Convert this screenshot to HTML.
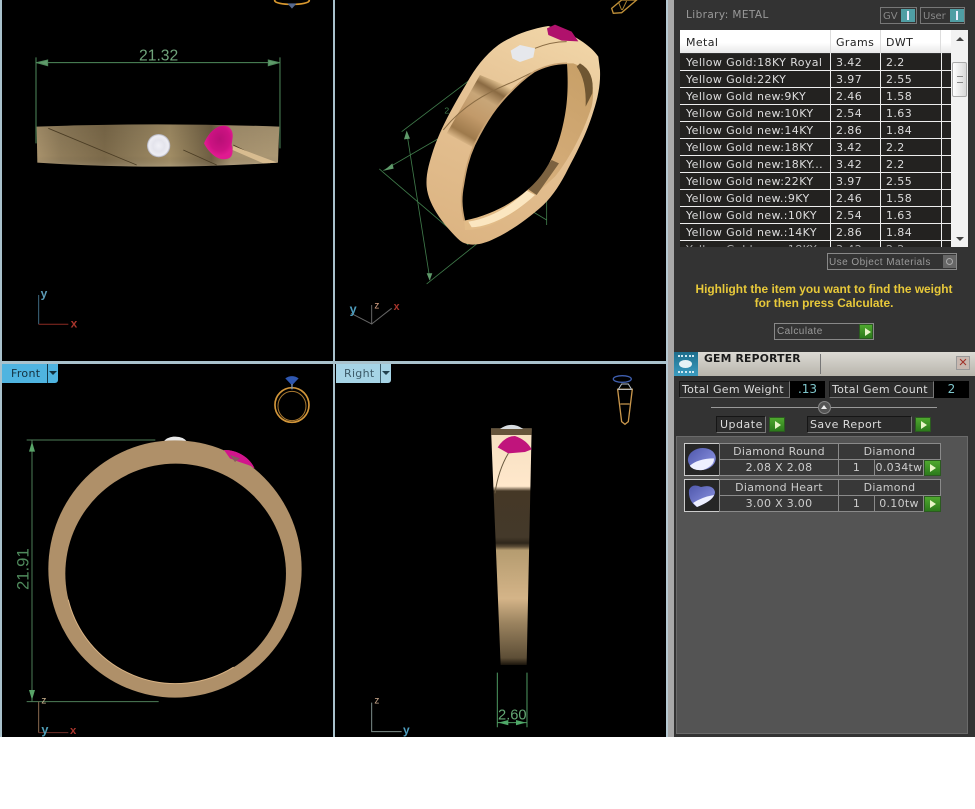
<!DOCTYPE html>
<html><head><meta charset="utf-8">
<style>
html,body{margin:0;padding:0;background:#fff;}
#p{position:relative;width:975px;height:809px;overflow:hidden;background:#fff;font-family:"DejaVu Sans","Liberation Sans",sans-serif;font-size:11px;}
#p div{position:absolute;box-sizing:border-box;white-space:nowrap;}
.r{left:680px;width:272px;height:17px;background:#232220;border-bottom:1px solid #eee;color:#ddd;line-height:17px;font-size:11px;letter-spacing:.4px;}
.r span{position:absolute;top:0;}
.a{left:6px}.b{left:156px}.c{left:206px}
.g{background:linear-gradient(#4fa82f,#2c7a1c);border:1px solid #2b5a20;}
.g:after{content:"";position:absolute;left:5px;top:3px;border-left:6px solid #e8f5c8;border-top:4px solid transparent;border-bottom:4px solid transparent;}
.d{background:#2c2c2c;color:#ddd;border:1px solid #151515;border-bottom-color:#777;border-right-color:#777;line-height:15px;font-size:11px;letter-spacing:.3px;}
.cell{border:1px solid #8a8a8a;background:#383838;color:#ccc;text-align:center;line-height:15px;font-size:11px;letter-spacing:.3px;}
.t{font-family:"Liberation Sans",sans-serif;color:#9a9a9a;font-size:10px;letter-spacing:.45px;}
</style></head><body><div id="p">
<svg width="975" height="809" style="position:absolute;left:0;top:0" xmlns="http://www.w3.org/2000/svg">
<defs>
<linearGradient id="top" x1="0" x2="1" y1="0" y2="0">
<stop offset="0" stop-color="#a8926c"/><stop offset=".1" stop-color="#8f7c5a"/><stop offset=".28" stop-color="#7c6a4a"/><stop offset=".4" stop-color="#8c7a58"/><stop offset=".55" stop-color="#a08c64"/><stop offset=".72" stop-color="#6e5e42"/><stop offset=".8" stop-color="#a5916e"/><stop offset="1" stop-color="#ac9874"/>
</linearGradient>
<linearGradient id="topv" x1="0" x2="0" y1="0" y2="1">
<stop offset="0" stop-color="#000" stop-opacity=".08"/><stop offset=".75" stop-color="#000" stop-opacity="0"/><stop offset="1" stop-color="#fff" stop-opacity=".12"/>
</linearGradient>
<linearGradient id="right" x1="0" x2="0" y1="0" y2="1">
<stop offset="0" stop-color="#f5dfc0"/><stop offset=".245" stop-color="#ffe8cc"/><stop offset=".265" stop-color="#453826"/><stop offset=".46" stop-color="#44392a"/><stop offset=".485" stop-color="#2e261a"/><stop offset=".5" stop-color="#5b4c36"/><stop offset=".515" stop-color="#b59c70"/><stop offset=".72" stop-color="#d4b488"/><stop offset=".82" stop-color="#9c8460"/><stop offset=".97" stop-color="#5d4e36"/><stop offset="1" stop-color="#1a140c"/>
</linearGradient>
<linearGradient id="ps" gradientUnits="userSpaceOnUse" x1="640" y1="90" x2="360" y2="720">
<stop offset="0" stop-color="#f0d4a6"/><stop offset=".4" stop-color="#e5c294"/><stop offset="1" stop-color="#dcb482"/>
</linearGradient>
<linearGradient id="wall" gradientUnits="userSpaceOnUse" x1="485" y1="240" x2="378" y2="425">
<stop offset="0" stop-color="#e8c896"/><stop offset=".15" stop-color="#8a6a42"/><stop offset=".32" stop-color="#c8a678"/><stop offset=".6" stop-color="#c29a6a"/><stop offset=".88" stop-color="#9e7a4c"/><stop offset="1" stop-color="#ddb98a"/>
</linearGradient>
<linearGradient id="inn" gradientUnits="userSpaceOnUse" x1="770" y1="220" x2="480" y2="680">
<stop offset="0" stop-color="#c8a068"/><stop offset=".5" stop-color="#d2aa76"/><stop offset="1" stop-color="#e2bc88"/>
</linearGradient>
<linearGradient id="gem" x1="0" x2="1" y1="0" y2="1">
<stop offset="0" stop-color="#4f58ac"/><stop offset="1" stop-color="#8f96e4"/>
</linearGradient>
<radialGradient id="dia"><stop offset="0" stop-color="#f0f0f6"/><stop offset=".5" stop-color="#e4e4ec"/><stop offset=".85" stop-color="#eeeef4"/><stop offset="1" stop-color="#a8a8b4"/></radialGradient>
<radialGradient id="hrt" cx=".55" cy=".4"><stop offset="0" stop-color="#b80f76"/><stop offset=".7" stop-color="#cc1282"/><stop offset="1" stop-color="#e01a90"/></radialGradient>
</defs>
<!-- viewport backdrop -->
<rect x="0" y="0" width="667" height="737" fill="#000"/>
<rect x="0" y="0" width="2" height="737" fill="#a9c2cc"/>
<rect x="333" y="0" width="2" height="737" fill="#a9c2cc"/>
<rect x="0" y="361" width="667" height="3" fill="#a9c2cc"/>
<rect x="666" y="0" width="2" height="737" fill="#b5c8d2"/>
<rect x="668" y="0" width="6" height="737" fill="#a8a8a8"/>

<!-- TOP VIEW -->
<g transform="scale(.3333)">
<path d="M110 380Q470 366 838 380L834 488Q470 512 112 488Z" fill="url(#top)"/>
<path d="M110 380Q470 366 838 380L834 488Q470 512 112 488Z" fill="url(#topv)"/>
<path d="M145 385L410 495M550 450L650 495M700 435L810 490" stroke="#4a3c24" stroke-width="2.5" fill="none"/>
<path d="M700 438L832 488L790 490L698 450Z" fill="#d8bc90"/>
<circle cx="476" cy="437" r="35" fill="url(#dia)"/>
<path d="M612 430C625 400 645 378 672 377C692 378 700 395 698 412L695 435C700 450 698 468 690 473C675 482 655 478 640 465C628 455 618 442 612 430Z" fill="url(#hrt)"/>
<g stroke="#4f8a5c" stroke-width="3" fill="#5f9a6a">
<path d="M108 172V430M840 172V445M108 188H840" fill="none"/>
<path d="M110 188L143 180V197Z"/><path d="M838 188L805 180V197Z"/>
</g>
<text x="476" y="181" text-anchor="middle" fill="#6fa37a" font-family="Liberation Sans,sans-serif" font-size="47" stroke="none">21.32</text>
<path d="M116 885V973" fill="none" stroke="#3f6a80" stroke-width="3"/>
<path d="M116 973H205" fill="none" stroke="#8c2a22" stroke-width="3"/>
<text x="122" y="893" fill="#5d9db8" font-family="Liberation Sans,sans-serif" font-size="36" font-weight="bold">y</text>
<text x="212" y="982" fill="#a8352c" font-family="Liberation Sans,sans-serif" font-size="36" font-weight="bold">x</text>
<ellipse cx="876" cy="2" rx="52" ry="11" fill="none" stroke="#d9982e" stroke-width="5"/>
<path d="M862 10H890L876 26Z" fill="#56698f"/>
</g>

<!-- PERSPECTIVE VIEW -->
<g transform="translate(335,0) scale(.3333)">
<g stroke="#3f7a4a" stroke-width="2.5" fill="none">
<path d="M200 395L490 175M145 512L690 195M133 507L400 735M275 852L640 560M215 395L285 840M585 630L635 660M635 595V675"/>
</g>
<path d="M215 392L207 418L225 416Z" fill="#5f9a6a"/><path d="M147 512L172 490L176 506Z" fill="#5f9a6a"/><path d="M284 842L275 820L292 820Z" fill="#5f9a6a"/>
<text x="328" y="340" fill="#3f7a4a" font-family="Liberation Sans,sans-serif" font-size="26">2</text>
<!-- outer body -->
<path d="M640 78C580 88 530 108 490 135C450 165 420 205 395 250C350 325 315 390 295 450C282 490 272 525 275 560C280 620 335 685 375 722C395 738 430 738 470 720C525 695 575 660 625 615C655 585 678 550 700 505C735 440 760 385 775 335C790 290 797 250 795 210L790 170C770 140 725 110 680 92Z" fill="url(#ps)"/>
<!-- shaded wall patch -->
<path d="M435 225L535 265L420 445L335 400Z" fill="url(#wall)"/>
<path d="M325 390C380 320 450 280 535 245L590 218M600 145Q650 125 695 125" stroke="#8a6c44" stroke-width="3" fill="none"/>
<!-- inner surface right/bottom -->
<path d="M715 190C760 205 785 250 770 320C745 400 700 480 660 530L560 620C500 670 440 690 390 690L388 662L696 190Z" fill="url(#inn)"/>
<path d="M735 190Q780 215 772 280L752 320Q755 240 725 200Z" fill="#6f5632"/>
<path d="M580 568L650 480L672 490L605 585Z" fill="#7c6240"/>
<path d="M400 665C470 655 530 615 575 572L600 585C530 650 460 680 410 682Z" fill="#fbe6c0"/>
<!-- hole -->
<path d="M696 190C700 250 698 300 690 345C680 400 668 440 645 485C620 530 600 550 575 572C530 610 470 645 388 662C378 620 378 590 385 555C392 510 400 475 418 435C440 390 465 345 497 308C530 270 560 240 597 215C630 198 665 190 696 190Z" fill="#000"/>
<path d="M388 662C378 620 378 590 385 555C392 510 400 475 418 435C440 390 465 345 497 308C530 270 560 240 597 215C630 198 665 190 696 190" fill="none" stroke="#c9a272" stroke-width="5"/>
<path d="M636 85L660 74L710 95L730 124L680 122L640 105Z" fill="#b0116c"/>
<path d="M527 152L555 135L600 145L595 172L555 186L532 175Z" fill="#e6e8ec"/>
<path d="M110 915V972L48 940M110 972L170 925" fill="none" stroke="#666" stroke-width="3"/>
<text x="118" y="925" fill="#d8a284" font-family="Liberation Sans,sans-serif" font-size="30">z</text>
<text x="44" y="940" fill="#4f9fc0" font-family="Liberation Sans,sans-serif" font-size="38" font-weight="bold">y</text>
<text x="176" y="930" fill="#a8352c" font-family="Liberation Sans,sans-serif" font-size="32" font-weight="bold">x</text>
<path d="M830 25L860 0H905L860 38L835 40Z" fill="none" stroke="#c09038" stroke-width="4"/>
<path d="M850 5L860 30M875 3L862 30" stroke="#a88030" stroke-width="3"/>
</g>

<!-- FRONT VIEW -->
<g transform="translate(0,360) scale(.3333)">
<path d="M490 246Q500 232 520 230Q550 228 562 246Z" fill="#e8e8e8"/>
<path d="M672 270C700 268 745 285 764 325L700 300Z" fill="#d2158c"/>
<ellipse cx="525" cy="627" rx="380" ry="386" fill="#af9069"/>
<path d="M672 270C700 268 745 285 762 322L745 315L715 305L690 295Z" fill="#d2158c"/>
<path d="M690 285L720 295L705 306Z" fill="#8a5a60"/>
<ellipse cx="527" cy="641" rx="331" ry="330" fill="#000"/>
<path d="M205 720A331 330 0 0 0 700 922" fill="none" stroke="#d9b384" stroke-width="3" stroke-linecap="round"/>
<g stroke="#4e7e58" stroke-width="3" fill="none"><path d="M80 240H466M80 1025H476M96 240V1025"/></g>
<path d="M96 245L87 275H105Z" fill="#58a468"/><path d="M96 1020L87 990H105Z" fill="#58a468"/>
<text transform="translate(86,690) rotate(-90)" fill="#4f8a5c" font-family="Liberation Sans,sans-serif" font-size="50">21.91</text>
<path d="M116 1025V1118" stroke="#8a6a50" stroke-width="3"/><path d="M116 1118H205" stroke="#70302a" stroke-width="3"/>
<text x="124" y="1030" fill="#c8b08c" font-family="Liberation Sans,sans-serif" font-size="30">z</text>
<text x="124" y="1122" fill="#4f9fb8" font-family="Liberation Sans,sans-serif" font-size="38" font-weight="bold">y</text>
<text x="210" y="1122" fill="#a8352c" font-family="Liberation Sans,sans-serif" font-size="34" font-weight="bold">x</text>
<ellipse cx="876" cy="135" rx="51" ry="52" fill="none" stroke="#d2963a" stroke-width="5"/>
<ellipse cx="876" cy="138" rx="42" ry="44" fill="none" stroke="#a87830" stroke-width="3"/>
<path d="M856 55Q876 42 896 55L876 76Z" fill="#2f57b0"/><path d="M876 72V88" stroke="#7a90b0" stroke-width="4"/>
</g>

<!-- RIGHT VIEW -->
<g transform="translate(335,360) scale(.3333)">
<path d="M468 205H590L575 915H497Z" fill="url(#right)"/>
<path d="M468 205H590V225H468Z" fill="#66553c"/>
<path d="M495 207Q530 182 565 207Z" fill="#d8dce0"/>
<path d="M488 262Q510 228 540 228Q575 240 590 268L570 276L520 280Z" fill="#c0147c"/>
<path d="M520 280Q490 330 480 400" stroke="#6a5a40" stroke-width="3" fill="none"/>
<g stroke="#4f9a62" stroke-width="3" fill="none"><path d="M487 938V1102M576 938V1102M487 1088H576"/></g>
<text x="532" y="1079" text-anchor="middle" fill="#64a874" font-family="Liberation Sans,sans-serif" font-size="44">2.60</text>
<path d="M490 1088L520 1080V1096Z M573 1088L543 1080V1096Z" fill="#4fa868"/>
<path d="M110 1028V1115H200" fill="none" stroke="#7d8d8a" stroke-width="3"/>
<text x="118" y="1030" fill="#c8a88c" font-family="Liberation Sans,sans-serif" font-size="30">z</text>
<text x="204" y="1122" fill="#4f9fc0" font-family="Liberation Sans,sans-serif" font-size="36" font-weight="bold">y</text>
<ellipse cx="862" cy="57" rx="27" ry="10" fill="none" stroke="#3f5fb0" stroke-width="4"/>
<path d="M848 88H892L880 185L870 193L860 185ZM856 132H884" fill="none" stroke="#c8964c" stroke-width="4"/>
<path d="M860 72H880L890 88H850Z" fill="none" stroke="#b8c0c8" stroke-width="3"/>
</g>
</svg>

<!-- left tabs -->
<div style="left:2px;top:364px;width:56px;height:19px;background:#4fb4e0;border-radius:0 0 3px 0;color:#14303e;font-size:11px;line-height:19px;padding-left:9px;letter-spacing:.3px">Front<div style="left:45px;top:0;width:1px;height:19px;background:#12384a"></div><div style="left:47px;top:7px;border-top:4px solid #12303e;border-left:4px solid transparent;border-right:4px solid transparent"></div></div>
<div style="left:336px;top:364px;width:55px;height:19px;background:#a6d4e6;border-radius:0 0 3px 0;color:#3c5a68;font-size:11px;line-height:19px;padding-left:8px;letter-spacing:.3px">Right<div style="left:44px;top:0;width:1px;height:19px;background:#3a5a68"></div><div style="left:46px;top:7px;border-top:4px solid #22404e;border-left:4px solid transparent;border-right:4px solid transparent"></div></div>

<!-- right panel -->
<div style="left:674px;top:0;width:301px;height:737px;background:#333"></div>
<div style="left:686px;top:8px;color:#999;font-size:10.5px;letter-spacing:.4px;line-height:14px">Library: METAL</div>
<div style="left:880px;top:7px;width:37px;height:17px;border:1px solid #777;color:#888;font-size:10px;line-height:17px;padding-left:2px">GV<div style="left:20px;top:1px;width:14px;height:13px;background:#4f9ea4"></div><div style="left:26px;top:3px;width:2px;height:9px;background:#eef"></div></div>
<div style="left:920px;top:7px;width:45px;height:17px;border:1px solid #777;color:#888;font-size:10px;line-height:17px;padding-left:2px">User<div style="left:29px;top:1px;width:14px;height:13px;background:#4f9ea4"></div><div style="left:35px;top:3px;width:2px;height:9px;background:#eef"></div></div>

<!-- table -->
<div style="left:680px;top:30px;width:272px;height:23px;background:linear-gradient(#fff 55%,#e8e8e8);color:#222;font-size:11px;line-height:25px;letter-spacing:.4px"><span style="position:absolute;left:6px">Metal</span><span style="position:absolute;left:156px">Grams</span><span style="position:absolute;left:206px">DWT</span><div style="left:150px;top:0;width:1px;height:23px;background:#ddd"></div><div style="left:200px;top:0;width:1px;height:23px;background:#ddd"></div><div style="left:260px;top:0;width:1px;height:23px;background:#ddd"></div></div>
<div class="r" style="top:54px"><span class="a">Yellow Gold:18KY Royal</span><span class="b">3.42</span><span class="c">2.2</span></div>
<div class="r" style="top:71px"><span class="a">Yellow Gold:22KY</span><span class="b">3.97</span><span class="c">2.55</span></div>
<div class="r" style="top:88px"><span class="a">Yellow Gold new:9KY</span><span class="b">2.46</span><span class="c">1.58</span></div>
<div class="r" style="top:105px"><span class="a">Yellow Gold new:10KY</span><span class="b">2.54</span><span class="c">1.63</span></div>
<div class="r" style="top:122px"><span class="a">Yellow Gold new:14KY</span><span class="b">2.86</span><span class="c">1.84</span></div>
<div class="r" style="top:139px"><span class="a">Yellow Gold new:18KY</span><span class="b">3.42</span><span class="c">2.2</span></div>
<div class="r" style="top:156px"><span class="a">Yellow Gold new:18KY...</span><span class="b">3.42</span><span class="c">2.2</span></div>
<div class="r" style="top:173px"><span class="a">Yellow Gold new:22KY</span><span class="b">3.97</span><span class="c">2.55</span></div>
<div class="r" style="top:190px"><span class="a">Yellow Gold new.:9KY</span><span class="b">2.46</span><span class="c">1.58</span></div>
<div class="r" style="top:207px"><span class="a">Yellow Gold new.:10KY</span><span class="b">2.54</span><span class="c">1.63</span></div>
<div class="r" style="top:224px"><span class="a">Yellow Gold new.:14KY</span><span class="b">2.86</span><span class="c">1.84</span></div>
<div style="left:680px;top:241px;width:272px;height:6px;background:#232220;overflow:hidden;color:#aaa;font-size:11px;line-height:17px;letter-spacing:.4px"><span style="position:absolute;left:6px;top:0">Yellow Gold new.:18KY</span><span style="position:absolute;left:156px;top:0">3.42</span><span style="position:absolute;left:206px;top:0">2.2</span></div>
<div style="left:830px;top:53px;width:1px;height:194px;background:#eee"></div>
<div style="left:880px;top:53px;width:1px;height:194px;background:#eee"></div>
<div style="left:941px;top:53px;width:1px;height:194px;background:#eee"></div>
<!-- scrollbar -->
<div style="left:951px;top:30px;width:17px;height:217px;background:#f2f2f2"></div>
<div style="left:952px;top:62px;width:15px;height:35px;background:linear-gradient(90deg,#fff,#d8d8d8);border:1px solid #aaa;border-radius:2px"></div>
<div style="left:957px;top:76px;width:6px;height:7px;border-top:1px solid #888;border-bottom:1px solid #888"></div>
<div style="left:956px;top:37px;border-bottom:4px solid #444;border-left:4px solid transparent;border-right:4px solid transparent"></div>
<div style="left:956px;top:237px;border-top:4px solid #444;border-left:4px solid transparent;border-right:4px solid transparent"></div>

<div class="t" style="left:827px;top:253px;width:130px;height:17px;border:1px solid #888;line-height:17px;padding-left:1px">Use Object Materials<div style="left:115px;top:1px;width:13px;height:13px;background:#666"></div><div style="left:118px;top:4px;width:7px;height:7px;border:1px solid #aaa;border-radius:50%"></div></div>
<div style="left:674px;top:283px;width:300px;text-align:center;color:#e8c93a;font-family:'Liberation Sans',sans-serif;font-size:11.9px;font-weight:bold;line-height:13.5px;white-space:normal">Highlight the item you want to find the weight<br>for then press Calculate.</div>
<div class="t" style="left:774px;top:323px;width:100px;height:17px;border:1px solid #888;line-height:16px;padding-left:2px">Calculate</div>
<div class="g" style="left:859px;top:324px;width:14px;height:15px"></div>

<!-- gem reporter -->
<div style="left:674px;top:352px;width:301px;height:24px;background:linear-gradient(#dcdad4,#b8b5ac)"></div>
<div style="left:674px;top:352px;width:24px;height:24px;background:linear-gradient(#1d6d8c,#3b9cc0)"></div>
<div style="left:678px;top:355px;width:16px;height:18px;border-top:2px dotted #cfe8f2;border-bottom:2px dotted #cfe8f2"></div>
<div style="left:679px;top:360px;width:13px;height:8px;background:#e6f2f6;border-radius:50%"></div>
<div style="left:704px;top:352px;color:#1a1a1a;font-family:'DejaVu Sans',sans-serif;font-weight:bold;font-size:10.8px;line-height:14px;letter-spacing:.2px">GEM REPORTER</div>
<div style="left:820px;top:354px;width:1px;height:20px;background:#777"></div>
<div style="left:956px;top:356px;width:14px;height:14px;background:#c8b8b0;border:1px solid #999;color:#a03028;font-family:'Liberation Sans',sans-serif;font-size:15px;line-height:12px;text-align:center">×</div>

<div class="d" style="left:679px;top:381px;width:111px;height:17px;padding-left:2px">Total Gem Weight</div>
<div style="left:790px;top:381px;width:35px;height:17px;background:#000;color:#7fc6cc;font-size:12px;line-height:16px;text-align:center">.13</div>
<div class="d" style="left:829px;top:381px;width:105px;height:17px;padding-left:2px">Total Gem Count</div>
<div style="left:934px;top:381px;width:35px;height:17px;background:#000;color:#7fc6cc;font-size:12px;line-height:16px;text-align:center">2</div>

<div style="left:711px;top:407px;width:226px;height:1px;background:#999"></div>
<div style="left:818px;top:401px;width:13px;height:13px;border-radius:50%;background:#555;border:1px solid #888"></div>
<div style="left:821px;top:405px;border-bottom:4px solid #eee;border-left:3px solid transparent;border-right:3px solid transparent"></div>

<div class="d" style="left:716px;top:416px;width:50px;height:17px;padding-left:3px;letter-spacing:.5px">Update</div>
<div class="g" style="left:769px;top:417px;width:16px;height:15px"></div>
<div class="d" style="left:807px;top:416px;width:105px;height:17px;padding-left:2px;letter-spacing:.45px">Save Report</div>
<div class="g" style="left:915px;top:417px;width:16px;height:15px"></div>

<div style="left:676px;top:436px;width:292px;height:298px;background:#545454;border:1px solid #6a6a6a"></div>

<!-- gem row 1 -->
<div style="left:684px;top:443px;width:36px;height:33px;background:#262626;border:1px solid #ccc"></div>
<svg width="36" height="33" style="position:absolute;left:684px;top:443px"><g transform="rotate(-8 18 17)"><ellipse cx="18" cy="16" rx="14" ry="11" fill="url(#gem)"/><path d="M5 21Q14 15 30 17Q30 24 18 27Q8 27 5 21Z" fill="#eef0ff"/></g></svg>
<div class="cell" style="left:719px;top:443px;width:120px;height:17px">Diamond Round</div>
<div class="cell" style="left:838px;top:443px;width:103px;height:17px">Diamond</div>
<div class="cell" style="left:719px;top:459px;width:120px;height:17px">2.08 X 2.08</div>
<div class="cell" style="left:838px;top:459px;width:37px;height:17px">1</div>
<div class="cell" style="left:874px;top:459px;width:50px;height:17px">0.034tw</div>
<div class="g" style="left:924px;top:460px;width:17px;height:16px"></div>

<!-- gem row 2 -->
<div style="left:684px;top:479px;width:36px;height:33px;background:#262626;border:1px solid #ccc"></div>
<svg width="36" height="33" style="position:absolute;left:684px;top:479px"><path d="M5 11Q8 4 17 8Q29 5 31 13Q31 21 13 28Q4 22 5 11Z" fill="url(#gem)"/><path d="M9 24Q18 18 30 16Q28 22 13 28Z" fill="#eef0ff"/></svg>
<div class="cell" style="left:719px;top:479px;width:120px;height:17px">Diamond Heart</div>
<div class="cell" style="left:838px;top:479px;width:103px;height:17px">Diamond</div>
<div class="cell" style="left:719px;top:495px;width:120px;height:17px">3.00 X 3.00</div>
<div class="cell" style="left:838px;top:495px;width:37px;height:17px">1</div>
<div class="cell" style="left:874px;top:495px;width:50px;height:17px">0.10tw</div>
<div class="g" style="left:924px;top:496px;width:17px;height:16px"></div>
</div></body></html>
